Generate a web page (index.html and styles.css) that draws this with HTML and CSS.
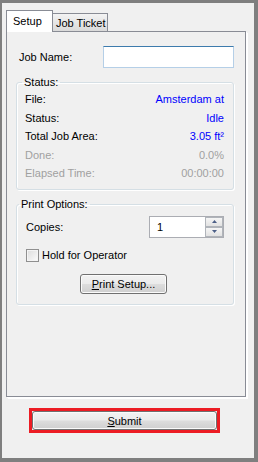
FILE: index.html
```html
<!DOCTYPE html>
<html>
<head>
  <title>Job Setup</title>
  <link rel="stylesheet" href="styles.css">
</head>

<body>
  <div class="window">
    <div class="tabs">
      <div class="tab tab-active">Setup</div>
      <div class="tab">Job Ticket</div>
    </div>

    <div class="tab-page">
      <div class="job-row">
        <label for="job-name">Job Name:</label>
        <input type="text" id="job-name" class="text-input">
      </div>

      <fieldset class="group group-status">
        <legend>Status:</legend>
        <div class="group-body">
          <div class="info-row">
            <span>File:</span>
            <span class="value">Amsterdam at</span>
          </div>
          <div class="info-row">
            <span>Status:</span>
            <span class="value">Idle</span>
          </div>
          <div class="info-row">
            <span>Total Job Area:</span>
            <span class="value">3.05 ft²</span>
          </div>
          <div class="info-row disabled">
            <span>Done:</span>
            <span>0.0%</span>
          </div>
          <div class="info-row disabled">
            <span>Elapsed Time:</span>
            <span>00:00:00</span>
          </div>
        </div>
      </fieldset>

      <fieldset class="group group-print">
        <legend>Print Options:</legend>
        <div class="group-body">
          <div class="copies-row">
            <label for="copies">Copies:</label>
            <div class="spin">
              <input type="text" id="copies" class="spin-input" value="1">
              <div class="spin-buttons">
                <span class="spin-btn">
                  <svg width="5" height="3" viewBox="0 0 5 3"><path d="M2.5 0 L5 3 L0 3 Z" fill="#4c5f87"/></svg>
                </span>
                <span class="spin-btn">
                  <svg width="5" height="3" viewBox="0 0 5 3"><path d="M0 0 L5 0 L2.5 3 Z" fill="#4c5f87"/></svg>
                </span>
              </div>
            </div>
          </div>
          <div class="check-row">
            <span class="checkbox"></span>
            <span>Hold for Operator</span>
          </div>
          <div class="button-row">
            <button class="btn btn-setup"><u>P</u>rint Setup...</button>
          </div>
        </div>
      </fieldset>
    </div>

    <div class="submit-frame">
      <button class="btn btn-submit"><u>S</u>ubmit</button>
    </div>
  </div>
</body>

</html>
```

FILE: styles.css
```css
body {
  margin: 0;
  font-family: "Liberation Sans", Arial, sans-serif;
  font-size: 11px;
  color: #000;
}

.window {
  box-sizing: border-box;
  height: 462px;
  border-style: solid;
  border-color: #7f7f7f;
  border-width: 3px 4px 4px 2px;
  background-color: #f0f0f0;
  padding: 7px 0 0 4px;
}

/* tab strip */
.tabs {
  display: flex;
  align-items: flex-end;
  height: 22px;
  margin-bottom: -1px;
  position: relative;
  z-index: 1;
}

.tab {
  box-sizing: border-box;
  width: 55px;
  height: 19px;
  padding: 3px 0 0 3px;
  border: 1px solid #898c95;
  border-left: none;
  background: linear-gradient(#f3f3f3, #e6e6e6 50%, #dadada);
  line-height: 13px;
}

.tab-active {
  width: 47px;
  height: 22px;
  padding: 4px 0 0 6px;
  border-left: 1px solid #898c95;
  border-bottom: none;
  background: #fff;
}

/* tab page */
.tab-page {
  box-sizing: border-box;
  width: 240px;
  height: 366px;
  border: 1px solid #898c95;
  box-shadow: 1px 1px 0 #fff, 2px 2px 0 #fff;
  background-color: #f0f0f0;
  padding-top: 14px;
}

.job-row {
  display: flex;
  align-items: center;
  padding: 0 11px 0 12px;
}

.job-row label {
  flex: 1;
}

.text-input {
  box-sizing: border-box;
  width: 131px;
  height: 22px;
  margin: 0;
  border: 1px solid #b5cfe7;
  border-top-color: #3d7bad;
  background: #fff;
  outline: none;
}

/* group boxes */
.group {
  margin: 8px 11px 0 9px;
  padding: 0;
  border: 1px solid #d5dfe5;
  border-radius: 3px;
  box-shadow: inset 1px 1px 0 #fff, 1px 1px 0 #fff;
  min-width: 0;
}

.group legend {
  margin-left: 5px;
  padding: 0 2px;
  line-height: 13px;
}

.group-status .group-body {
  padding: 1px 9px 6px 8px;
}

.group-print legend {
  margin-left: 2px;
}

.group-print .group-body {
  padding: 5px 9px 10px 9px;
}

.info-row {
  display: flex;
  justify-content: space-between;
  align-items: center;
  height: 18.5px;
}

.info-row .value {
  color: #0000ff;
}

.info-row.disabled {
  color: #a0a0a0;
}

/* copies spinner */
.copies-row {
  display: flex;
  justify-content: space-between;
  align-items: center;
  height: 22px;
}

.spin {
  box-sizing: border-box;
  display: flex;
  width: 75px;
  height: 22px;
  border: 1px solid #abadb3;
  background: #fff;
}

.spin-input {
  flex: 1;
  min-width: 0;
  margin: 0;
  padding: 0 0 0 7px;
  border: none;
  outline: none;
  font: inherit;
  background: transparent;
}

.spin-buttons {
  display: flex;
  flex-direction: column;
  width: 18px;
}

.spin-btn {
  box-sizing: border-box;
  display: flex;
  justify-content: center;
  align-items: center;
  height: 10px;
  border: 1px solid #b0b4ba;
  background: linear-gradient(#f6f6f6, #e2e2e2);
}

/* checkbox */
.check-row {
  display: flex;
  align-items: center;
  gap: 3px;
  height: 13px;
  margin-top: 11px;
}

.checkbox {
  box-sizing: border-box;
  width: 13px;
  height: 13px;
  border: 1px solid #8f8f8f;
  background: linear-gradient(135deg, #dcdcdc, #fcfcfc);
  box-shadow: inset 0 0 0 1px #f4f4f4;
}

/* buttons */
.button-row {
  display: flex;
  margin-top: 12px;
  padding-left: 54px;
}

.btn {
  box-sizing: border-box;
  margin: 0;
  padding: 0;
  border: 1px solid #707070;
  border-radius: 3px;
  background: linear-gradient(#f2f2f2, #ebebeb 48%, #dddddd 52%, #cfcfcf);
  box-shadow: inset 0 0 0 1px #fbfbfb;
  font: inherit;
  color: #000;
}

.btn-setup {
  width: 87px;
  height: 20px;
}

.submit-frame {
  box-sizing: border-box;
  width: 191px;
  height: 25px;
  margin: 11px 0 0 23px;
  border: 3px solid #ec1c24;
}

.btn-submit {
  display: block;
  width: 100%;
  height: 100%;
}
```
